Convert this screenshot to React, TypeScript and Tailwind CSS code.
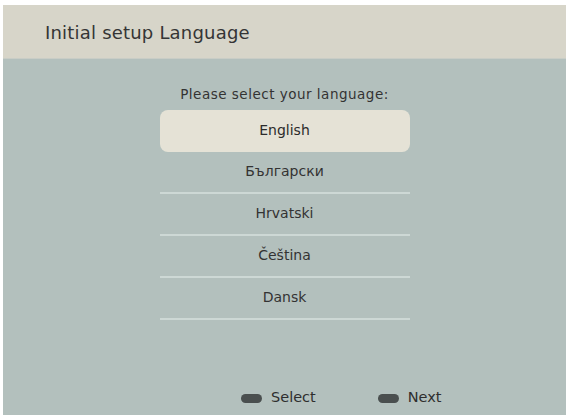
import React from 'react'

const languages = ['English', 'Български', 'Hrvatski', 'Čeština', 'Dansk']

const Key = () => <span className="inline-block w-[21px] h-[9px] rounded-full bg-[#4a4f4f] blur-[0.6px]" />

const App = () => {
  return (
    <div className="w-[570px] h-[417px] bg-white pt-[5px] pl-[3px] pr-[4px] pb-[2px] font-['DejaVu_Sans',sans-serif]">
      <div className="flex flex-col h-full">
        {/* Header */}
        <div className="h-[54px] bg-[#d7d5c9] flex items-center pl-[42px] pt-[2px] border-b border-[#c9cdc6]">
          <h1 className="text-[18px] text-[#353535] tracking-[0.2px]">Initial setup Language</h1>
        </div>

        {/* Body */}
        <div className="flex-1 bg-[#b3c0bd] flex flex-col items-center pt-[29px]">
          <p className="text-[13.5px] text-[#333] tracking-[0.5px] leading-none">Please select your language:</p>
          <ul className="w-[250px] mt-[8px]">
            {languages.map((lang, i) => (
              <li
                key={lang}
                className={
                  i === 0
                    ? 'h-[42px] flex items-center justify-center rounded-[8px] bg-[#e5e2d6] text-[14px] text-[#2b2b2b]'
                    : 'h-[42px] flex items-center justify-center border-b-2 border-[#cdd8d5] text-[14px] text-[#333]'
                }
              >
                {lang}
              </li>
            ))}
          </ul>

          <div className="flex-1" />

          {/* Footer hints */}
          <div className="w-full flex items-center gap-[62px] pl-[238px] pb-[6px] text-[14.5px] text-[#2e2e2e]">
            <span className="flex items-center gap-[9px]">
              <Key />
              Select
            </span>
            <span className="flex items-center gap-[9px]">
              <Key />
              Next
            </span>
          </div>
        </div>
      </div>
    </div>
  )
}

export default App
